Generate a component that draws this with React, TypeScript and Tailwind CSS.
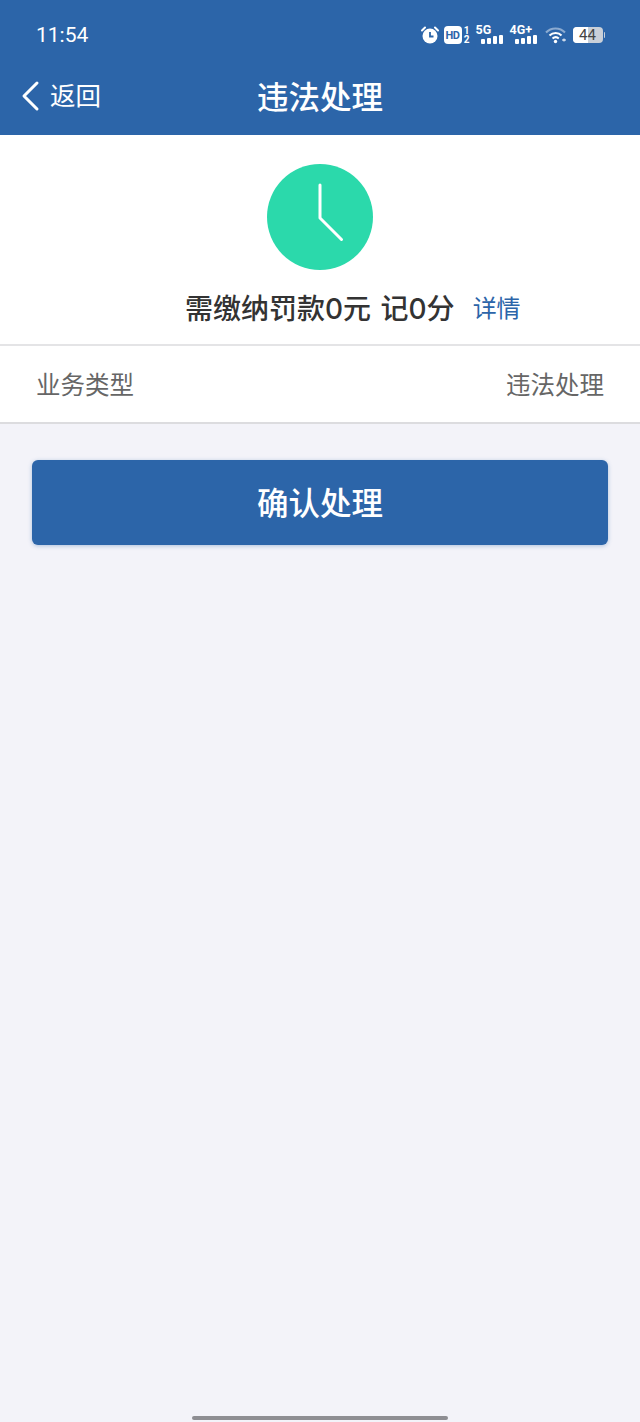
const cjk = "font-['Roboto','Noto_Sans_CJK_SC',sans-serif]";
const cjkInter = "font-['Inter','Noto_Sans_CJK_SC',sans-serif]";

function AlarmIcon() {
  return (
    <svg width="18" height="18" viewBox="0 0 18 18">
      <circle cx="9" cy="10" r="7.5" fill="#fff" />
      <path d="M1 4.5 L4 1.5 M17 4.5 L14 1.5" stroke="#fff" strokeWidth="2" strokeLinecap="round" />
      <path d="M9 6 V10.5 H12.5" stroke="#2c65a9" strokeWidth="1.8" fill="none" />
    </svg>
  );
}

function HdIcon() {
  return (
    <div className="flex h-[18px] items-center gap-[1px]">
      <div className="flex h-[18px] w-[18px] items-center justify-center rounded-[4px] bg-white text-[11px] leading-none font-bold tracking-[-0.5px] text-[#2c65a9] font-['Roboto',sans-serif]">
        HD
      </div>
      <div className="flex w-[8px] flex-col items-center text-[10px] leading-[9px] font-bold text-white font-['Roboto',sans-serif]">
        <span>1</span>
        <span>2</span>
      </div>
    </div>
  );
}

function SignalIcon({ label, labelWidth }: { label: string; labelWidth: string }) {
  return (
    <div className="relative h-[18px] w-[27px]">
      <span className={`absolute top-[-3px] left-0 text-[12.5px] leading-[14px] font-bold text-white font-['Roboto',sans-serif] ${labelWidth}`}>
        {label}
      </span>
      <div className="absolute right-0 bottom-0 flex items-end gap-[2px]">
        <div className="h-[5px] w-[4px] rounded-[1px] bg-white" />
        <div className="h-[6px] w-[4px] rounded-[1px] bg-white" />
        <div className="h-[8px] w-[4px] rounded-[1px] bg-white" />
        <div className="h-[9px] w-[4px] rounded-[1px] bg-white" />
      </div>
    </div>
  );
}

function WifiIcon() {
  return (
    <svg width="22" height="18" viewBox="0 0 22 18" fill="none">
      <path d="M1 6.5 C6 1 15 1 20 6.5" stroke="#fff" strokeOpacity="0.45" strokeWidth="2" />
      <path d="M4.5 9.5 C8 6 13.5 6 16.5 9.5" stroke="#fff" strokeWidth="2" />
      <path d="M7.5 12.5 C9.5 10.8 12 10.8 13.8 12.5" stroke="#fff" strokeWidth="2" />
      <circle cx="10.5" cy="15.5" r="1.7" fill="#fff" />
      <path d="M17 14 H21 M19 12.5 V15.5" stroke="#fff" strokeWidth="1" />
    </svg>
  );
}

function Battery() {
  return (
    <div className="flex items-center">
      <div className="relative flex h-[16px] w-[30px] items-center justify-center overflow-hidden rounded-[4px] bg-[#c9d0d9]">
        <div className="absolute inset-y-0 left-0 w-[15px] bg-white" />
        <span className="relative text-[15px] leading-none text-[#444] font-['Roboto',sans-serif]">44</span>
      </div>
      <div className="ml-[1px] h-[6px] w-[1.5px] rounded-r-[1px] bg-[#c9d0d9]" />
    </div>
  );
}

function Header() {
  return (
    <header className="h-[135px] bg-[#2c65a9] text-white">
      <div className="flex h-[70px] items-center justify-between pr-[35px] pl-[36px]">
        <span className="text-[21px] leading-none font-['Roboto',sans-serif]">11:54</span>
        <div className="flex items-center">
          <AlarmIcon />
          <div className="ml-[5px]">
            <HdIcon />
          </div>
          <div className="ml-[5px]">
            <SignalIcon label="5G" labelWidth="w-[16px]" />
          </div>
          <div className="ml-[7px]">
            <SignalIcon label="4G+" labelWidth="w-[24px]" />
          </div>
          <div className="ml-[8px]">
            <WifiIcon />
          </div>
          <div className="ml-[6px]">
            <Battery />
          </div>
        </div>
      </div>
      <div className="relative flex h-[54px] items-center justify-center">
        <div className="absolute top-0 left-[20px] flex h-[54px] items-center">
          <svg className="-translate-y-px" width="20" height="32" viewBox="0 0 20 32" fill="none">
            <path d="M17 3 L4 16 L17 29" stroke="#fff" strokeWidth="3" strokeLinecap="round" strokeLinejoin="round" />
          </svg>
          <span className={`ml-[10px] text-[25.5px] leading-none ${cjk}`}>返回</span>
        </div>
        <h1 className={`translate-y-[2px] text-[31.5px] leading-none font-[450] ${cjk}`}>违法处理</h1>
      </div>
    </header>
  );
}

export default function App() {
  return (
    <div className="relative flex h-[1422px] w-[640px] flex-col overflow-hidden bg-[#f3f3f9]">
      <Header />
      <section className="h-[211px] border-b-2 border-[#e4e4e6] bg-white pt-[29px]">
        <div className="flex justify-center">
          <svg width="106" height="106" viewBox="0 0 106 106">
            <circle cx="53" cy="53" r="53" fill="#2bd9ab" />
            <path d="M53 21 V54 L74.5 75.5" stroke="#fff" strokeWidth="3" fill="none" strokeLinecap="round" strokeLinejoin="round" />
          </svg>
        </div>
        <div className="mt-[20px] flex h-[38px] items-center pl-[185px]">
          <span className={`text-[28px] leading-none font-[450] whitespace-pre text-[#333] [word-spacing:2px] ${cjkInter}`}>需缴纳罚款0元 记0分</span>
          <span className={`ml-[18px] text-[24px] leading-none text-[#2c65a9] ${cjk}`}>详情</span>
        </div>
      </section>
      <div className="flex h-[78px] items-center justify-between border-b-2 border-[#dcdcdf] bg-white pt-[5px] pr-[36px] pl-[36px]">
        <span className={`text-[24.5px] leading-none text-[#666] ${cjk}`}>业务类型</span>
        <span className={`text-[24.5px] leading-none text-[#666] ${cjk}`}>违法处理</span>
      </div>
      <div className="px-[32px] pt-[36px]">
        <button className={`flex h-[85px] w-full items-center justify-center rounded-[6px] bg-[#2c65a9] pt-[5px] text-[31.5px] leading-none font-[450] text-white shadow-[0_1px_4px_rgba(44,101,169,0.35)] ${cjk}`}>
          确认处理
        </button>
      </div>
      <div className="absolute bottom-[2px] left-[192px] h-[4px] w-[256px] rounded-full bg-[#8e8e93]" />
    </div>
  );
}
